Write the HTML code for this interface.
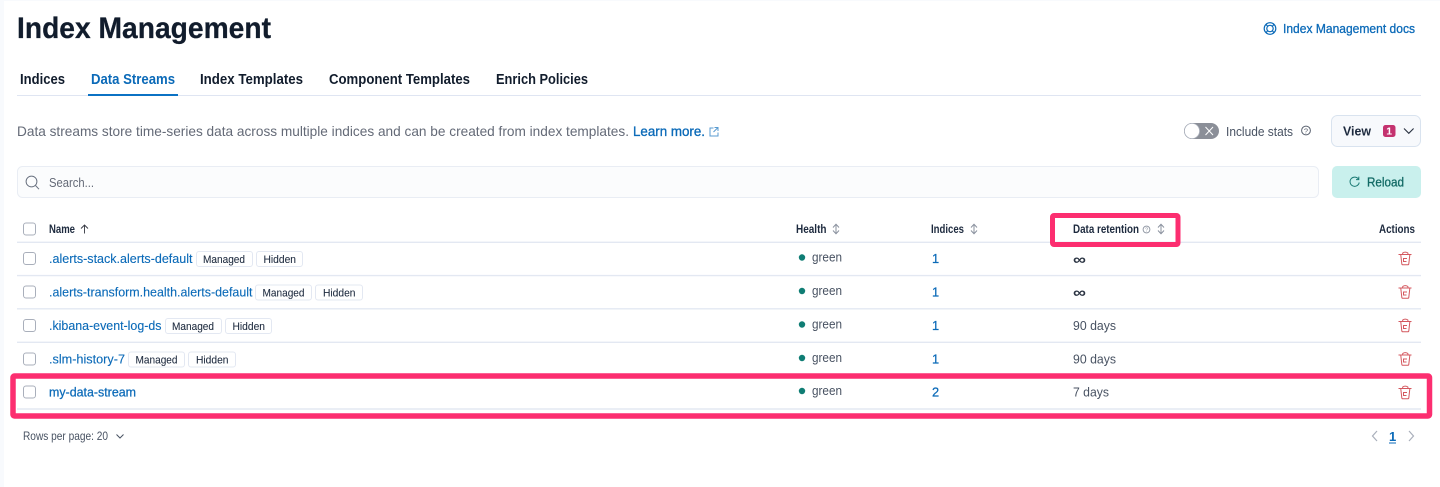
<!DOCTYPE html>
<html><head><meta charset="utf-8"><title>Index Management</title>
<style>
html,body{margin:0;padding:0;background:#fff;width:1440px;height:487px;overflow:hidden}
svg{display:block}
text{font-family:"Liberation Sans",sans-serif;font-size:12px;fill:#343741}
.tab{font-size:14.5px;font-weight:700;fill:#111c2c}
.th{font-size:11.5px;font-weight:700;fill:#1d2a3e}
.lnk{font-size:12.8px;fill:#0b6ab8;stroke:#0b6ab8;stroke-width:.12}
.cell{font-size:12.8px;fill:#485262}
.bdg{font-size:11px;fill:#1d2a3e;stroke:#1d2a3e;stroke-width:.08}
.cb{fill:#fff;stroke:#a9afbb;stroke-width:1}
.ln{stroke:#e3e8f2;stroke-width:1.4}
.bx{fill:#fff;stroke:#e3e8f2;stroke-width:1}
.ic{fill:none;stroke:#8a919e;stroke-width:1}
.tr{fill:none;stroke:#d4585f;stroke-width:1}
</style></head><body>
<svg width="1440" height="487" viewBox="0 0 1440 487" xmlns="http://www.w3.org/2000/svg">
<rect x="0" y="0" width="1440" height="487" fill="#fff"/>
<rect x="0" y="0" width="4" height="487" fill="#f8fafd"/>
<rect x="0" y="0" width="1440" height="1" fill="#f8fafd"/>

<text x="17" y="38" textLength="254" lengthAdjust="spacingAndGlyphs" style="font-size:29.5px;font-weight:700;fill:#111c2c;stroke:#111c2c;stroke-width:.25">Index Management</text>

<g fill="none" stroke="#0b6ab8" stroke-width="1.2"><circle cx="1270" cy="28.5" r="5.8"/><circle cx="1270" cy="28.5" r="3.2"/><path d="M1266 24.5l2 2M1274 24.5l-2 2M1266 32.5l2-2M1274 32.5l-2-2"/></g>
<text x="1283" y="33" textLength="132" lengthAdjust="spacingAndGlyphs" style="font-size:13px;fill:#0b6ab8;stroke:#0b6ab8;stroke-width:.3">Index Management docs</text>

<text class="tab" x="20" y="84" textLength="45" lengthAdjust="spacingAndGlyphs">Indices</text>
<text class="tab" x="91" y="84" textLength="84" lengthAdjust="spacingAndGlyphs" style="fill:#0b6ab8">Data Streams</text>
<text class="tab" x="200" y="84" textLength="103" lengthAdjust="spacingAndGlyphs">Index Templates</text>
<text class="tab" x="329" y="84" textLength="141" lengthAdjust="spacingAndGlyphs">Component Templates</text>
<text class="tab" x="496" y="84" textLength="92" lengthAdjust="spacingAndGlyphs">Enrich Policies</text>
<line x1="17" y1="95.5" x2="1421" y2="95.5" stroke="#dfe5f2" stroke-width="1"/>
<rect x="88" y="94" width="90" height="2" fill="#0b72c4"/>

<text x="17" y="136" textLength="612" lengthAdjust="spacingAndGlyphs" style="font-size:14px;fill:#646a77">Data streams store time-series data across multiple indices and can be created from index templates.</text>
<text x="633" y="136" textLength="72" lengthAdjust="spacingAndGlyphs" style="font-size:14px;fill:#0b6ab8;stroke:#0b6ab8;stroke-width:.35">Learn more.</text>
<path d="M713.5 128H710v8h8v-3.5M714.5 127.5h3.5v3.5M718 127.5l-4.5 4.5" fill="none" stroke="#5a9bd0" stroke-width="1"/>

<rect x="1184" y="123" width="35" height="16" rx="8" fill="#8b8f98"/>
<circle cx="1192" cy="131" r="7.6" fill="#fff" stroke="#a9afbb" stroke-width=".8"/>
<path d="M1205.5 127l7.5 8M1213 127l-7.5 8" stroke="#fff" stroke-width="1" fill="none"/>
<text x="1226" y="136" textLength="67" lengthAdjust="spacingAndGlyphs" style="font-size:12.8px;fill:#485262">Include stats</text>
<circle cx="1306" cy="130.5" r="4.4" fill="none" stroke="#5a6270" stroke-width="1"/>
<text x="1306" y="133.3" text-anchor="middle" style="font-size:7.5px;fill:#5a6270">?</text>

<rect x="1331.5" y="115.5" width="89" height="31" rx="6" fill="#f7f9fc" stroke="#d9e3ef"/>
<text x="1343" y="135.5" textLength="28" lengthAdjust="spacingAndGlyphs" style="font-size:12.8px;font-weight:700;fill:#1d2a3e">View</text>
<rect x="1383" y="125" width="12.5" height="12" rx="2.5" fill="#c4326f"/>
<text x="1389.2" y="134.6" text-anchor="middle" style="font-size:10.5px;font-weight:700;fill:#fff">1</text>
<path d="M1404 128.5l4.8 4.8 4.8-4.8" fill="none" stroke="#2a3342" stroke-width="1.1"/>

<rect x="17.5" y="166.5" width="1301" height="31" rx="5" fill="#fbfcfd" stroke="#e9edf4"/>
<circle cx="31.5" cy="181.5" r="5.4" fill="none" stroke="#6a7280" stroke-width="1"/>
<path d="M35.5 185.5l3.5 3.7" stroke="#6a7280" stroke-width="1" fill="none"/>
<text x="49" y="187" textLength="45" lengthAdjust="spacingAndGlyphs" style="font-size:12.8px;fill:#646a77">Search...</text>

<rect x="1332" y="166" width="89" height="32" rx="5" fill="#c9f0ed"/>
<path d="M1358.6 179.3a4.6 4.6 0 1 0 .6 3.2M1358.8 176.6v3h-2.8" fill="none" stroke="#1a7a74" stroke-width="1"/>
<text x="1367" y="186.5" textLength="37" lengthAdjust="spacingAndGlyphs" style="font-size:12.8px;fill:#136b66;stroke:#136b66;stroke-width:.3">Reload</text>

<!-- table header -->
<rect class="cb" x="23.5" y="223" width="12" height="12" rx="2.5"/>
<text class="th" x="49" y="233" textLength="26" lengthAdjust="spacingAndGlyphs">Name</text>
<path d="M84.5 233.5V225M81 228.5l3.5-3.5 3.5 3.5" fill="none" stroke="#343741" stroke-width=".9"/>
<text class="th" x="796" y="233" textLength="30.5" lengthAdjust="spacingAndGlyphs">Health</text>
<path class="ic" d="M836 224.5v9M833 227.5l3-3.3 3 3.3M833 230.5l3 3.3 3-3.3"/>
<text class="th" x="931" y="233" textLength="33" lengthAdjust="spacingAndGlyphs">Indices</text>
<path class="ic" d="M974 224.5v9M971 227.5l3-3.3 3 3.3M971 230.5l3 3.3 3-3.3"/>
<text class="th" x="1073" y="233" textLength="66" lengthAdjust="spacingAndGlyphs">Data retention</text>
<circle cx="1146.5" cy="229.5" r="3.4" fill="none" stroke="#8a919e" stroke-width=".9"/>
<text x="1146.5" y="231.7" text-anchor="middle" style="font-size:5.5px;fill:#8a919e">?</text>
<path class="ic" d="M1161 224.5v9M1158 227.5l3-3.3 3 3.3M1158 230.5l3 3.3 3-3.3"/>
<text class="th" x="1379" y="233" textLength="36" lengthAdjust="spacingAndGlyphs">Actions</text>
<line class="ln" x1="17" y1="242.3" x2="1421" y2="242.3"/>

<!-- row 1 -->
<rect class="cb" x="23.5" y="252.5" width="12" height="12" rx="2.5"/>
<text class="lnk" x="49" y="263" textLength="143.5" lengthAdjust="spacingAndGlyphs">.alerts-stack.alerts-default</text>
<rect class="bx" x="196.5" y="251.5" width="56" height="15" rx="2.5"/>
<text class="bdg" x="203" y="263" textLength="42" lengthAdjust="spacingAndGlyphs">Managed</text>
<rect class="bx" x="256.5" y="251.5" width="46" height="15" rx="2.5"/>
<text class="bdg" x="263.5" y="263" textLength="32.5" lengthAdjust="spacingAndGlyphs">Hidden</text>
<circle cx="802" cy="257.5" r="3.2" fill="#0f7d74"/>
<text class="cell" x="812" y="261.5" textLength="30" lengthAdjust="spacingAndGlyphs">green</text>
<text class="lnk" x="932" y="263" style="stroke-width:.25">1</text>
<text x="1073" y="264.5" textLength="13" lengthAdjust="spacingAndGlyphs" style="font-size:15px;font-weight:700;fill:#2a3342">∞</text>
<path class="tr" d="M1398.5 254.5h13M1402.5 254.5l.3-1.6q2.4-1.5 5 0l.3 1.6M1400.8 255l1 8.8q.1 1 1.1 1h4.8q1 0 1.1-1l1-8.8M1407 258.5h-3.5v3h3"/>
<line class="ln" x1="17" y1="275.6" x2="1421" y2="275.6"/>

<!-- row 2 -->
<rect class="cb" x="23.5" y="286" width="12" height="12" rx="2.5"/>
<text class="lnk" x="49" y="296.5" textLength="203.5" lengthAdjust="spacingAndGlyphs">.alerts-transform.health.alerts-default</text>
<rect class="bx" x="255.5" y="285" width="56" height="15" rx="2.5"/>
<text class="bdg" x="262.5" y="296.5" textLength="42" lengthAdjust="spacingAndGlyphs">Managed</text>
<rect class="bx" x="315.5" y="285" width="47" height="15" rx="2.5"/>
<text class="bdg" x="323" y="296.5" textLength="32.5" lengthAdjust="spacingAndGlyphs">Hidden</text>
<circle cx="802" cy="291" r="3.2" fill="#0f7d74"/>
<text class="cell" x="812" y="295" textLength="30" lengthAdjust="spacingAndGlyphs">green</text>
<text class="lnk" x="932" y="296.5" style="stroke-width:.25">1</text>
<text x="1073" y="297.5" textLength="13" lengthAdjust="spacingAndGlyphs" style="font-size:15px;font-weight:700;fill:#2a3342">∞</text>
<path class="tr" d="M1398.5 288h13M1402.5 288l.3-1.6q2.4-1.5 5 0l.3 1.6M1400.8 288.5l1 8.8q.1 1 1.1 1h4.8q1 0 1.1-1l1-8.8M1407 292h-3.5v3h3"/>
<line class="ln" x1="17" y1="308.8" x2="1421" y2="308.8"/>

<!-- row 3 -->
<rect class="cb" x="23.5" y="319.5" width="12" height="12" rx="2.5"/>
<text class="lnk" x="49" y="330" textLength="112.5" lengthAdjust="spacingAndGlyphs">.kibana-event-log-ds</text>
<rect class="bx" x="165.5" y="318.5" width="56" height="15" rx="2.5"/>
<text class="bdg" x="172" y="330" textLength="42" lengthAdjust="spacingAndGlyphs">Managed</text>
<rect class="bx" x="225.5" y="318.5" width="46" height="15" rx="2.5"/>
<text class="bdg" x="232.5" y="330" textLength="32.5" lengthAdjust="spacingAndGlyphs">Hidden</text>
<circle cx="802" cy="324.5" r="3.2" fill="#0f7d74"/>
<text class="cell" x="812" y="328.5" textLength="30" lengthAdjust="spacingAndGlyphs">green</text>
<text class="lnk" x="932" y="330" style="stroke-width:.25">1</text>
<text class="cell" x="1073" y="330" textLength="43" lengthAdjust="spacingAndGlyphs">90 days</text>
<path class="tr" d="M1398.5 321.5h13M1402.5 321.5l.3-1.6q2.4-1.5 5 0l.3 1.6M1400.8 322l1 8.8q.1 1 1.1 1h4.8q1 0 1.1-1l1-8.8M1407 325.5h-3.5v3h3"/>
<line class="ln" x1="17" y1="342.3" x2="1421" y2="342.3"/>

<!-- row 4 -->
<rect class="cb" x="23.5" y="353" width="12" height="12" rx="2.5"/>
<text class="lnk" x="49" y="363.5" textLength="76" lengthAdjust="spacingAndGlyphs">.slm-history-7</text>
<rect class="bx" x="128.5" y="352" width="56" height="15" rx="2.5"/>
<text class="bdg" x="135.5" y="363.5" textLength="42" lengthAdjust="spacingAndGlyphs">Managed</text>
<rect class="bx" x="188.5" y="352" width="47" height="15" rx="2.5"/>
<text class="bdg" x="196" y="363.5" textLength="32.5" lengthAdjust="spacingAndGlyphs">Hidden</text>
<circle cx="802" cy="358" r="3.2" fill="#0f7d74"/>
<text class="cell" x="812" y="362" textLength="30" lengthAdjust="spacingAndGlyphs">green</text>
<text class="lnk" x="932" y="363.5" style="stroke-width:.25">1</text>
<text class="cell" x="1073" y="363.5" textLength="43" lengthAdjust="spacingAndGlyphs">90 days</text>
<path class="tr" d="M1398.5 355h13M1402.5 355l.3-1.6q2.4-1.5 5 0l.3 1.6M1400.8 355.5l1 8.8q.1 1 1.1 1h4.8q1 0 1.1-1l1-8.8M1407 359h-3.5v3h3"/>

<!-- row 5 -->
<rect class="cb" x="23.5" y="386" width="12" height="12" rx="2.5"/>
<text class="lnk" x="49" y="396.5" textLength="87" lengthAdjust="spacingAndGlyphs" style="stroke-width:.25">my-data-stream</text>
<circle cx="802" cy="391" r="3.2" fill="#0f7d74"/>
<text class="cell" x="812" y="395" textLength="30" lengthAdjust="spacingAndGlyphs">green</text>
<text class="lnk" x="932" y="396.5" style="stroke-width:.25">2</text>
<text class="cell" x="1073" y="396.5" textLength="36" lengthAdjust="spacingAndGlyphs">7 days</text>
<path class="tr" d="M1398.5 388.5h13M1402.5 388.5l.3-1.6q2.4-1.5 5 0l.3 1.6M1400.8 389l1 8.8q.1 1 1.1 1h4.8q1 0 1.1-1l1-8.8M1407 392.5h-3.5v3h3"/>
<line class="ln" x1="17" y1="409" x2="1421" y2="409"/>

<!-- highlights -->
<rect x="1052.5" y="215.5" width="125.5" height="29" rx="1.5" fill="none" stroke="#fc2e70" stroke-width="5"/>
<rect x="13" y="376" width="1416.5" height="40" rx="1.5" fill="none" stroke="#fc2e70" stroke-width="5.5"/>

<!-- footer -->
<text x="23" y="440" textLength="85" lengthAdjust="spacingAndGlyphs" style="font-size:11.8px;fill:#485262">Rows per page: 20</text>
<path d="M116.5 434.5l3.5 3.5 3.5-3.5" fill="none" stroke="#485262" stroke-width="1"/>
<path d="M1377 431l-4.5 5 4.5 5" fill="none" stroke="#a9afbb" stroke-width="1.2"/>
<text x="1389" y="441" style="font-size:13px;font-weight:700;fill:#0b6ab8">1</text>
<rect x="1389" y="442.5" width="7" height="1" fill="#0b6ab8"/>
<path d="M1409 431l4.5 5-4.5 5" fill="none" stroke="#a9afbb" stroke-width="1.2"/>
</svg>
</body></html>
